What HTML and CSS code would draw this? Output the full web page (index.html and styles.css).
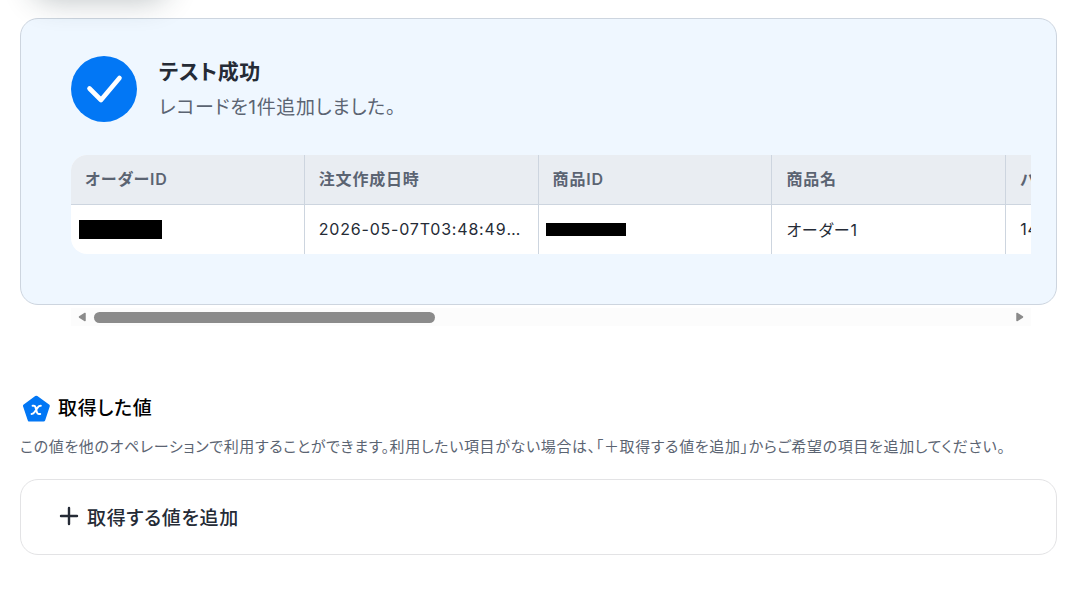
FILE: index.html
```
<!DOCTYPE html>
<html lang="ja">
<head>
<meta charset="utf-8">
<meta name="viewport" content="width=device-width, initial-scale=1">
<title>テスト成功</title>
<link rel="stylesheet" href="styles.css">
</head>
<body>
<div class="toolbar"><div class="toolbar-shadow"></div></div>
<main class="page">
  <section class="result">
    <header class="result-head">
      <svg class="check" viewBox="0 0 66 66" aria-hidden="true">
        <circle cx="33" cy="33" r="33" fill="#0277f5"/>
        <path d="M18.500 32.500 30 44 48.500 22" fill="none" stroke="#fff" stroke-width="4.600" stroke-linecap="round" stroke-linejoin="round"/>
      </svg>
      <div>
        <h1 class="result-title">テスト成功</h1>
        <p class="result-text">レコードを1件追加しました。</p>
      </div>
    </header>
    <div class="table-wrap">
      <table class="records">
        <thead>
          <tr><th>オーダーID</th><th>注文作成日時</th><th>商品ID</th><th>商品名</th><th>バリエーション</th></tr>
        </thead>
        <tbody>
          <tr>
            <td class="masked"><span class="mask mask-order"></span></td>
            <td>2026-05-07T03:48:49+09:00</td>
            <td class="masked"><span class="mask mask-item"></span></td>
            <td>オーダー1</td>
            <td>14</td>
          </tr>
        </tbody>
      </table>
    </div>
  </section>
  <div class="scrollbar" aria-hidden="true">
    <svg class="arrow" viewBox="0 0 8 10"><path d="M7 1.500v7L1.500 5z" fill="#8b8b8b" stroke="#8b8b8b" stroke-width="1.500" stroke-linejoin="round"/></svg>
    <div class="track"><div class="thumb"></div></div>
    <svg class="arrow" viewBox="0 0 8 10"><path d="M1 1.500v7L6.500 5z" fill="#8b8b8b" stroke="#8b8b8b" stroke-width="1.500" stroke-linejoin="round"/></svg>
  </div>
  <section class="values">
    <h2 class="values-title">
      <svg class="pentagon" viewBox="0 0 28 28" aria-hidden="true">
        <path d="M14.300 2.500 26 11 21.500 24.800H7.500L2.800 11z" fill="#0277f5" stroke="#0277f5" stroke-width="3.600" stroke-linejoin="round"/>
        <path d="M10.600 10.800h1.200c1 0 1.400.5 1.700 1.500l1.400 5c.3 1.100.8 1.600 1.800 1.600h1.500M18.800 10.700c-1.500 0-2.300.6-3.200 1.900l-2.800 4.200c-.9 1.400-1.700 2.100-3.200 2.100" fill="none" stroke="#fff" stroke-width="2" stroke-linecap="round"/>
      </svg>
      取得した値
    </h2>
    <p class="values-text">この値を他のオペレーションで利用することができます。利用したい項目がない場合は、「＋取得する値を追加」からご希望の項目を追加してください。</p>
    <button class="add" type="button">
      <svg class="plus" viewBox="0 0 20 20" aria-hidden="true"><path d="M10 2v16M2 10h16" fill="none" stroke="#252b36" stroke-width="2.400" stroke-linecap="round"/></svg>
      取得する値を追加
    </button>
  </section>
</main>
</body>
</html>
```
FILE: styles.css
```
* { box-sizing: border-box; }

body {
  margin: 0;
  background: #fff;
  color: #252b36;
  font-family: Inter, "Noto Sans CJK JP", sans-serif;
  font-feature-settings: "palt";
  letter-spacing: 0.04em;
}

h1, h2, p { margin: 0; }

.toolbar {
  position: relative;
  height: 18px;
}

.toolbar-shadow {
  position: absolute;
  bottom: 100%;
  left: 32px;
  width: 136px;
  height: 40px;
  border-radius: 20px;
  box-shadow: 0 0 30px rgba(30, 50, 55, 0.3);
}

.page {
  padding: 0 31px 47px 20px;
}

.result {
  padding: 37px 25px 50px 50px;
  border: 1px solid #cdd5df;
  border-radius: 18px;
  background: #eff7ff;
}

.result-head {
  display: flex;
  gap: 22px;
  height: 66px;
  margin-bottom: 33px;
}

.check {
  flex: none;
  width: 66px;
  height: 66px;
}

.result-title {
  font-size: 21px;
  font-weight: 600;
  line-height: 32px;
}

.result-text {
  color: #5b6472;
  font-size: 19px;
  line-height: 40px;
}

.table-wrap {
  overflow: hidden;
  border-radius: 16px 0 0 16px;
  background: #fff;
}

.records {
  width: 1169px;
  border-collapse: separate;
  border-spacing: 0;
  table-layout: fixed;
  letter-spacing: 0.05em;
}

.records th,
.records td {
  overflow: hidden;
  padding: 0 14px 2px;
  border-right: 1px solid #cdd5df;
  font-size: 16px;
  text-align: left;
  text-overflow: ellipsis;
  white-space: nowrap;
}

.records th {
  height: 50px;
  padding-bottom: 4px;
  border-bottom: 1px solid #cdd5df;
  background: #e9edf2;
  color: #5b6472;
  font-weight: 600;
}

.records td {
  height: 49px;
}

.records .masked {
  padding: 0 7px;
}

.mask {
  display: block;
  background: #000;
}

.mask-order {
  width: 83px;
  height: 19px;
  margin-left: 1px;
}

.mask-item {
  width: 80px;
  height: 13px;
}

.scrollbar {
  display: flex;
  align-items: center;
  gap: 8px;
  height: 18px;
  margin: 3px 26px 0 51px;
  padding: 0 7px;
  background: #fcfcfc;
}

.arrow {
  flex: none;
  width: 8px;
  height: 10px;
}

.track {
  flex: 1;
}

.thumb {
  width: 37.3%;
  height: 11px;
  border-radius: 6px;
  background: #8b8b8b;
}

.values {
  margin-top: 66px;
}

.values-title {
  display: flex;
  align-items: center;
  gap: 8px;
  padding-left: 2px;
  color: #000;
  font-size: 19px;
  font-weight: 500;
  line-height: 34px;
}

.pentagon {
  width: 28px;
  height: 28px;
}

.values-text {
  margin-top: 9px;
  color: #5b6472;
  font-size: 15px;
  line-height: 24px;
}

.add {
  display: flex;
  align-items: center;
  gap: 8px;
  width: 100%;
  height: 76px;
  margin-top: 20px;
  padding: 0 38px 2px;
  border: 1px solid #e3e3e5;
  border-radius: 18px;
  background: #fff;
  color: inherit;
  font: inherit;
  font-feature-settings: inherit;
  font-size: 19px;
  font-weight: 500;
  letter-spacing: inherit;
}

.plus {
  width: 20px;
  height: 20px;
}
```
